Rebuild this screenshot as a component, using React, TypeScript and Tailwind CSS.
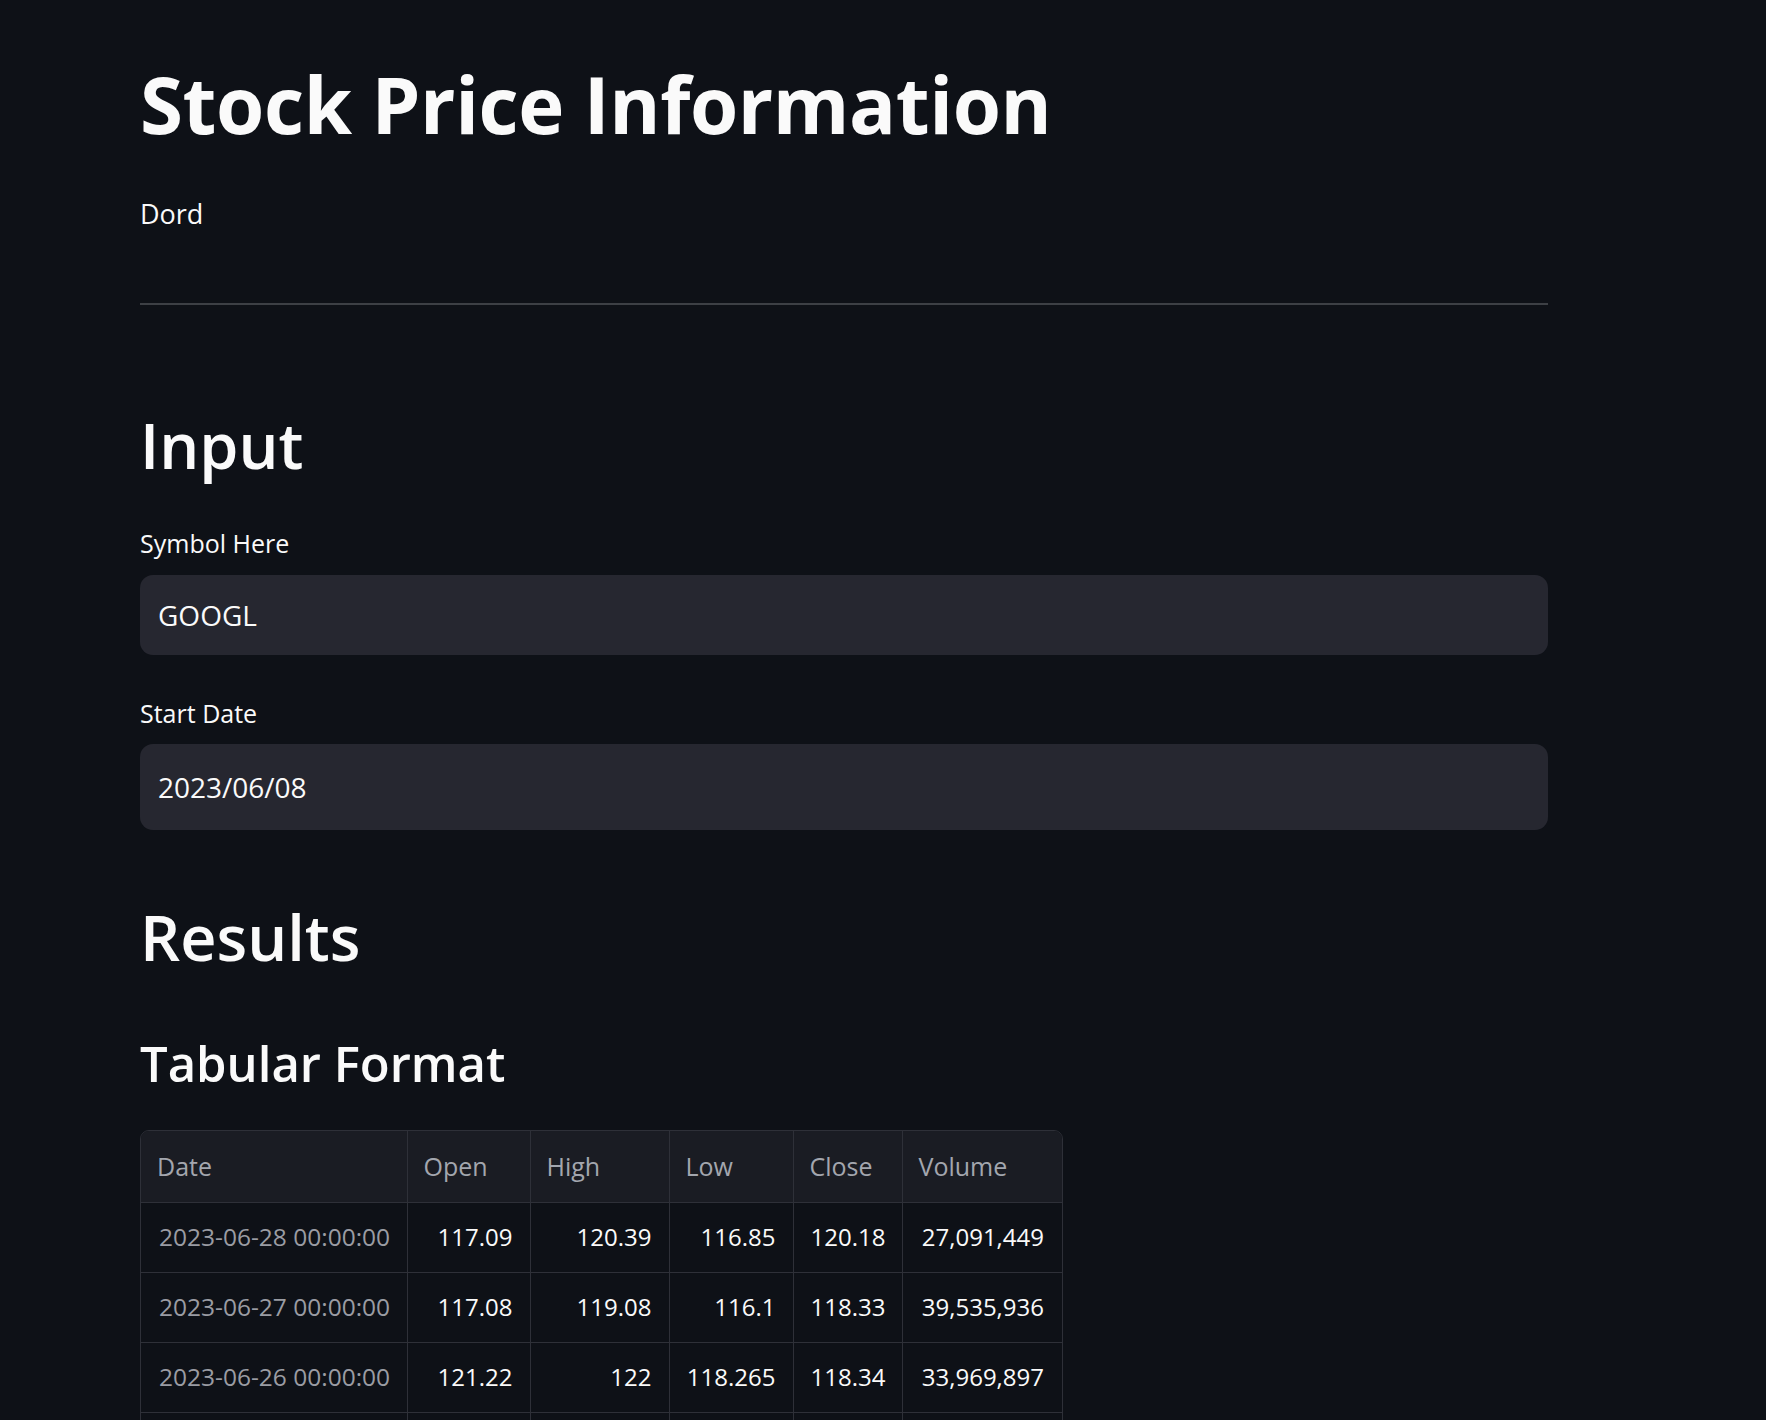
import React from 'react';

const rows = [
  { date: '2023-06-28 00:00:00', open: '117.09', high: '120.39', low: '116.85', close: '120.18', volume: '27,091,449' },
  { date: '2023-06-27 00:00:00', open: '117.08', high: '119.08', low: '116.1', close: '118.33', volume: '39,535,936' },
  { date: '2023-06-26 00:00:00', open: '121.22', high: '122', low: '118.265', close: '118.34', volume: '33,969,897' },
  { date: '2023-06-23 00:00:00', open: '121.1', high: '122.54', low: '120.45', close: '122.34', volume: '33,833,890' },
];

const headers = ['Date', 'Open', 'High', 'Low', 'Close', 'Volume'];

export default function App() {
  return (
    <div className="min-h-screen bg-[#0e1117] text-[#fafafa] font-['Open_Sans','Noto_Sans',sans-serif]">
      <main className="pl-[140px] w-[1548px] pt-[58px] pb-20">
        {/* header */}
        <h1 className="text-[78px] leading-[1.2] font-bold tracking-[-0.005em]">Stock Price Information</h1>
        <p className="mt-[42px] text-[27px] leading-[1.5]">Dord</p>
        <hr className="mt-[69px] h-[2px] border-0 bg-[#3d4045]" />

        {/* input section */}
        <h2 className="mt-[102px] text-[63px] leading-[1.2] font-semibold">Input</h2>

        <label className="block mt-[42px] text-[25px] leading-[1.5]">Symbol Here</label>
        <input
          readOnly
          value="GOOGL"
          className="mt-[13px] block w-full h-[80px] rounded-[13px] bg-[#262730] px-[18px] text-[28px] text-[#fafafa] outline-none"
        />

        <label className="block mt-[40px] text-[25px] leading-[1.5]">Start Date</label>
        <input
          readOnly
          value="2023/06/08"
          className="mt-[11px] block w-full h-[86px] rounded-[13px] bg-[#262730] px-[18px] text-[28px] text-[#fafafa] outline-none"
        />

        {/* results */}
        <h2 className="mt-[69px] text-[63px] leading-[1.2] font-semibold">Results</h2>
        <h3 className="mt-[60px] text-[49px] leading-[1.2] font-semibold">Tabular Format</h3>

        <div className="mt-[37px] w-[923px] rounded-[9px] border border-[#2e3038] overflow-hidden">
          <table className="w-full table-fixed border-collapse text-[24px]">
            <colgroup>
              <col className="w-[266px]" />
              <col className="w-[123px]" />
              <col className="w-[139px]" />
              <col className="w-[124px]" />
              <col className="w-[109px]" />
              <col className="w-[160px]" />
            </colgroup>
            <thead>
              <tr className="bg-[#1a1c23]">
                {headers.map((h) => (
                  <th
                    key={h}
                    className="h-[71px] px-[16px] text-left text-[25px] font-normal text-[#a3a6ae] border-l border-[#2e3038] first:border-l-0"
                  >
                    {h}
                  </th>
                ))}
              </tr>
            </thead>
            <tbody>
              {rows.map((r) => (
                <tr key={r.date} className="bg-[#0e1117]">
                  <td className="h-[70px] px-[18px] text-left text-[24.5px] text-[#9a9ca3] border-t border-[#2e3038] whitespace-nowrap">{r.date}</td>
                  <td className="px-[17px] text-right border-t border-l border-[#2e3038]">{r.open}</td>
                  <td className="px-[17px] text-right border-t border-l border-[#2e3038]">{r.high}</td>
                  <td className="px-[17px] text-right border-t border-l border-[#2e3038]">{r.low}</td>
                  <td className="px-[17px] text-right border-t border-l border-[#2e3038]">{r.close}</td>
                  <td className="px-[18px] text-right border-t border-l border-[#2e3038]">{r.volume}</td>
                </tr>
              ))}
            </tbody>
          </table>
        </div>
      </main>
    </div>
  );
}
